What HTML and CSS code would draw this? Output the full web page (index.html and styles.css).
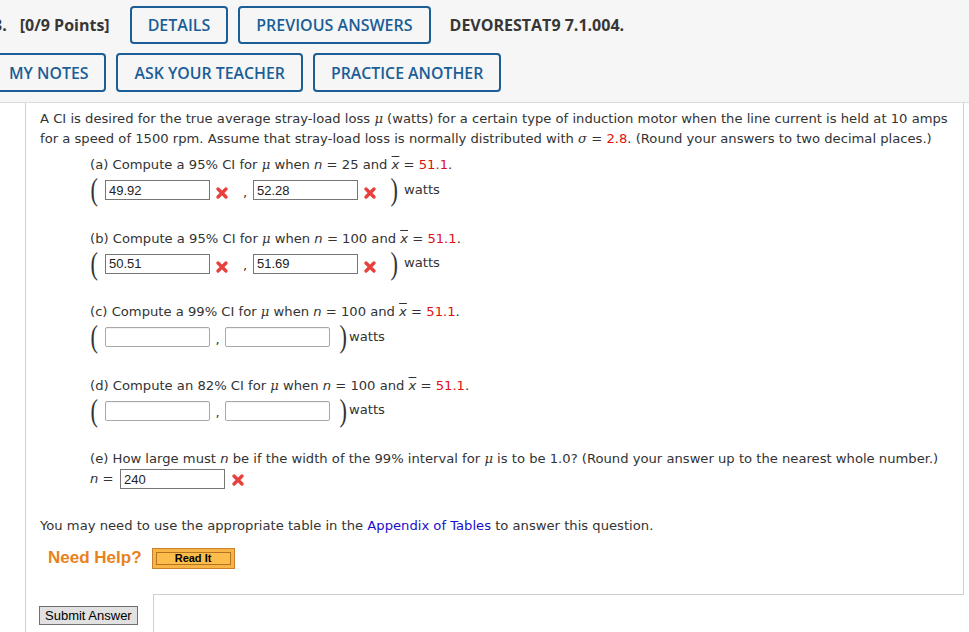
FILE: index.html
```html
<!DOCTYPE html>
<html>
<head>
<meta charset="utf-8">
<link rel="stylesheet" href="styles.css">
</head>
<body>
<header class="top">
  <div class="row row1">
    <span class="label"><span class="qnum">3.</span>[0/9 Points]</span>
    <button class="tab">DETAILS</button>
    <button class="tab">PREVIOUS ANSWERS</button>
    <span class="code">DEVORESTAT9 7.1.004.</span>
  </div>
  <div class="row row2">
    <button class="tab">MY NOTES</button>
    <button class="tab">ASK YOUR TEACHER</button>
    <button class="tab">PRACTICE ANOTHER</button>
  </div>
</header>
<main class="main">
  <section class="qbox">
    <p class="intro">A CI is desired for the true average stray-load loss <i class="g">μ</i> (watts) for a certain type of induction motor when the line current is held at 10 amps<br>for a speed of 1500 rpm. Assume that stray-load loss is normally distributed with <i class="g">σ</i> = <span class="red">2.8</span>. (Round your answers to two decimal places.)</p>
    <div class="parts">
      <div class="part">
        <div class="q">(a) Compute a 95% CI for <i class="g">μ</i> when <i>n</i> = 25 and <i class="xbar">x</i> = <span class="red">51.1</span>.</div>
        <div class="ans">
          <span class="paren open">(</span>
          <input class="fld" type="text" value="49.92">
          <svg class="xmark" viewBox="0 0 14 14" width="14" height="14"><path d="M3 3L11 11M11 3L3 11" stroke="#e8403c" stroke-width="3.4" stroke-linecap="round"/></svg>
          <span class="comma wide">,</span>
          <input class="fld" type="text" value="52.28">
          <svg class="xmark" viewBox="0 0 14 14" width="14" height="14"><path d="M3 3L11 11M11 3L3 11" stroke="#e8403c" stroke-width="3.4" stroke-linecap="round"/></svg>
          <span class="paren close wide">)</span>
          <span class="unit wide">watts</span>
        </div>
      </div>
      <div class="part">
        <div class="q">(b) Compute a 95% CI for <i class="g">μ</i> when <i>n</i> = 100 and <i class="xbar">x</i> = <span class="red">51.1</span>.</div>
        <div class="ans">
          <span class="paren open">(</span>
          <input class="fld" type="text" value="50.51">
          <svg class="xmark" viewBox="0 0 14 14" width="14" height="14"><path d="M3 3L11 11M11 3L3 11" stroke="#e8403c" stroke-width="3.4" stroke-linecap="round"/></svg>
          <span class="comma wide">,</span>
          <input class="fld" type="text" value="51.69">
          <svg class="xmark" viewBox="0 0 14 14" width="14" height="14"><path d="M3 3L11 11M11 3L3 11" stroke="#e8403c" stroke-width="3.4" stroke-linecap="round"/></svg>
          <span class="paren close wide">)</span>
          <span class="unit wide">watts</span>
        </div>
      </div>
      <div class="part">
        <div class="q">(c) Compute a 99% CI for <i class="g">μ</i> when <i>n</i> = 100 and <i class="xbar">x</i> = <span class="red">51.1</span>.</div>
        <div class="ans">
          <span class="paren open">(</span>
          <input class="fld empty" type="text" value="">
          <span class="comma">,</span>
          <input class="fld empty" type="text" value="">
          <span class="paren close">)</span>
          <span class="unit">watts</span>
        </div>
      </div>
      <div class="part">
        <div class="q">(d) Compute an 82% CI for <i class="g">μ</i> when <i>n</i> = 100 and <i class="xbar">x</i> = <span class="red">51.1</span>.</div>
        <div class="ans">
          <span class="paren open">(</span>
          <input class="fld empty" type="text" value="">
          <span class="comma">,</span>
          <input class="fld empty" type="text" value="">
          <span class="paren close">)</span>
          <span class="unit">watts</span>
        </div>
      </div>
      <div class="part last">
        <div class="q">(e) How large must <i>n</i> be if the width of the 99% interval for <i class="g">μ</i> is to be 1.0? (Round your answer up to the nearest whole number.)</div>
        <div class="nrow">
          <span class="neq"><i>n</i> =</span>
          <input class="fld" type="text" value="240">
          <svg class="xmark" viewBox="0 0 14 14" width="14" height="14"><path d="M3 3L11 11M11 3L3 11" stroke="#e8403c" stroke-width="3.4" stroke-linecap="round"/></svg>
        </div>
      </div>
    </div>
    <p class="note">You may need to use the appropriate table in the <a class="link" href="#">Appendix of Tables</a> to answer this question.</p>
    <div class="help">
      <span class="needhelp">Need Help?</span>
      <button class="readit"><span class="readit-in">Read It</span></button>
    </div>
  </section>
  <div class="footer">
    <div class="submit-col"><button class="submit">Submit Answer</button></div>
    <div class="msgbox"></div>
  </div>
</main>
</body>
</html>
```

FILE: styles.css
```css
* { box-sizing: border-box; }
html, body { margin: 0; padding: 0; background: #fff; }
body {
  width: 969px;
  height: 632px;
  overflow: hidden;
  font-family: "DejaVu Sans", Verdana, sans-serif;
  font-size: 13.15px;
  color: #333;
}

/* header */
.top {
  height: 103px;
  background: #f6f6f6;
  border-bottom: 1px solid #dcdcdc;
  padding-top: 6px;
}
.row {
  display: flex;
  align-items: center;
  gap: 10px;
  margin-left: -9px;
}
.row2 { margin-top: 9px; }
.label, .code {
  font-family: "Open Sans", sans-serif;
  font-weight: 700;
  font-size: 16px;
  color: #363636;
  white-space: nowrap;
}
.label { margin-right: 10px; margin-left: 2px; }
.qnum { margin-right: 13px; }
.code { margin-left: 9px; }
.tab {
  font-family: "Open Sans", sans-serif;
  font-weight: 600;
  font-size: 16px;
  color: #1b5e96;
  background: transparent;
  border: 2px solid #1b5e96;
  border-radius: 4px;
  height: 38px;
  padding: 0 16px;
  white-space: nowrap;
}
.row2 .tab { height: 39px; font-size: 15.85px; }

/* main */
.main {
  margin-left: 25px;
  border-left: 1px solid #cfcfcf;
}
.qbox {
  width: 938px;
  border-right: 1px solid #cfcfcf;
  padding: 6px 14px 25px 14px;
}
.intro { margin: 0 0 6px; line-height: 20px; white-space: nowrap; }
.g { font-family: "DejaVu Serif", serif; }
.red { color: #e01010; }
.xbar { text-decoration: overline; }
.parts { padding-left: 50px; }
.part { margin-bottom: 23.5px; }
.part.last { margin-bottom: 26px; }
.q { line-height: 20px; height: 20px; white-space: nowrap; }
.ans {
  display: flex;
  align-items: center;
  height: 30px;
}
.paren {
  display: inline-block;
  width: 10px;
  text-align: center;
  font-family: "Liberation Serif", serif;
  font-size: 31px;
  line-height: 30px;
  height: 30px;
  color: #333;
  transform: scale(0.72, 1);
  flex: none;
}
.paren.open { margin-left: -1px; margin-right: 6px; }
.paren.close { margin-left: 8px; }
.paren.close.wide { margin-left: 12px; }
.fld {
  width: 105px;
  height: 20px;
  border: 1px solid #767676;
  border-radius: 0;
  padding: 0 3px;
  font-family: "Liberation Sans", Arial, sans-serif;
  font-size: 13px;
  color: #222;
  background: #fff;
  margin: 0;
  outline: none;
  flex: none;
}
.fld.empty {
  border-color: #a8a8a8;
  border-radius: 2px;
  box-shadow: inset 0 1px 1px rgba(0,0,0,0.06);
}
.xmark { margin-left: 5px; margin-top: 6px; flex: none; }
.comma {
  width: 15px;
  text-align: center;
  padding-top: 4px;
  flex: none;
}
.comma.wide { width: 24px; padding-left: 14px; text-align: left; }
.unit { margin-left: 1px; margin-top: -2px; }
.unit.wide { margin-left: 5px; }
.nrow { display: flex; align-items: flex-start; height: 21px; }
.neq { width: 30px; line-height: 20px; white-space: nowrap; }
.nrow .xmark { margin-left: 6px; margin-top: 4px; }

.note { margin: 0; line-height: 20px; white-space: nowrap; }
.link { color: #1a0dcc; text-decoration: none; }

.help {
  display: flex;
  align-items: center;
  gap: 10px;
  margin-top: 11px;
  padding-left: 8px;
  height: 22px;
}
.needhelp {
  font-family: "Liberation Sans", Arial, sans-serif;
  font-weight: 700;
  font-size: 17px;
  color: #e8821c;
}
.readit {
  width: 83px;
  height: 21px;
  padding: 3px;
  border: 1px solid #c9802c;
  background: #f8b444;
  margin: 0;
}
.readit-in {
  display: block;
  height: 13px;
  border: 1px solid #b3731f;
  background: #fcbd4c;
  font-family: "Liberation Sans", Arial, sans-serif;
  font-weight: 700;
  font-size: 11px;
  line-height: 11px;
  color: #000;
  text-align: center;
}

.footer { display: flex; }
.submit-col { width: 127px; padding: 12px 0 0 13px; }
.submit {
  font-family: "Liberation Sans", Arial, sans-serif;
  font-size: 13px;
  color: #000;
  background: #e1e1e1;
  border: 1px solid #707070;
  height: 19px;
  padding: 0 5px;
  line-height: 16px;
  white-space: nowrap;
  margin: 0;
}
.msgbox {
  width: 811px;
  height: 60px;
  border-top: 1px solid #cfcfcf;
  border-left: 1px solid #cfcfcf;
}
```
